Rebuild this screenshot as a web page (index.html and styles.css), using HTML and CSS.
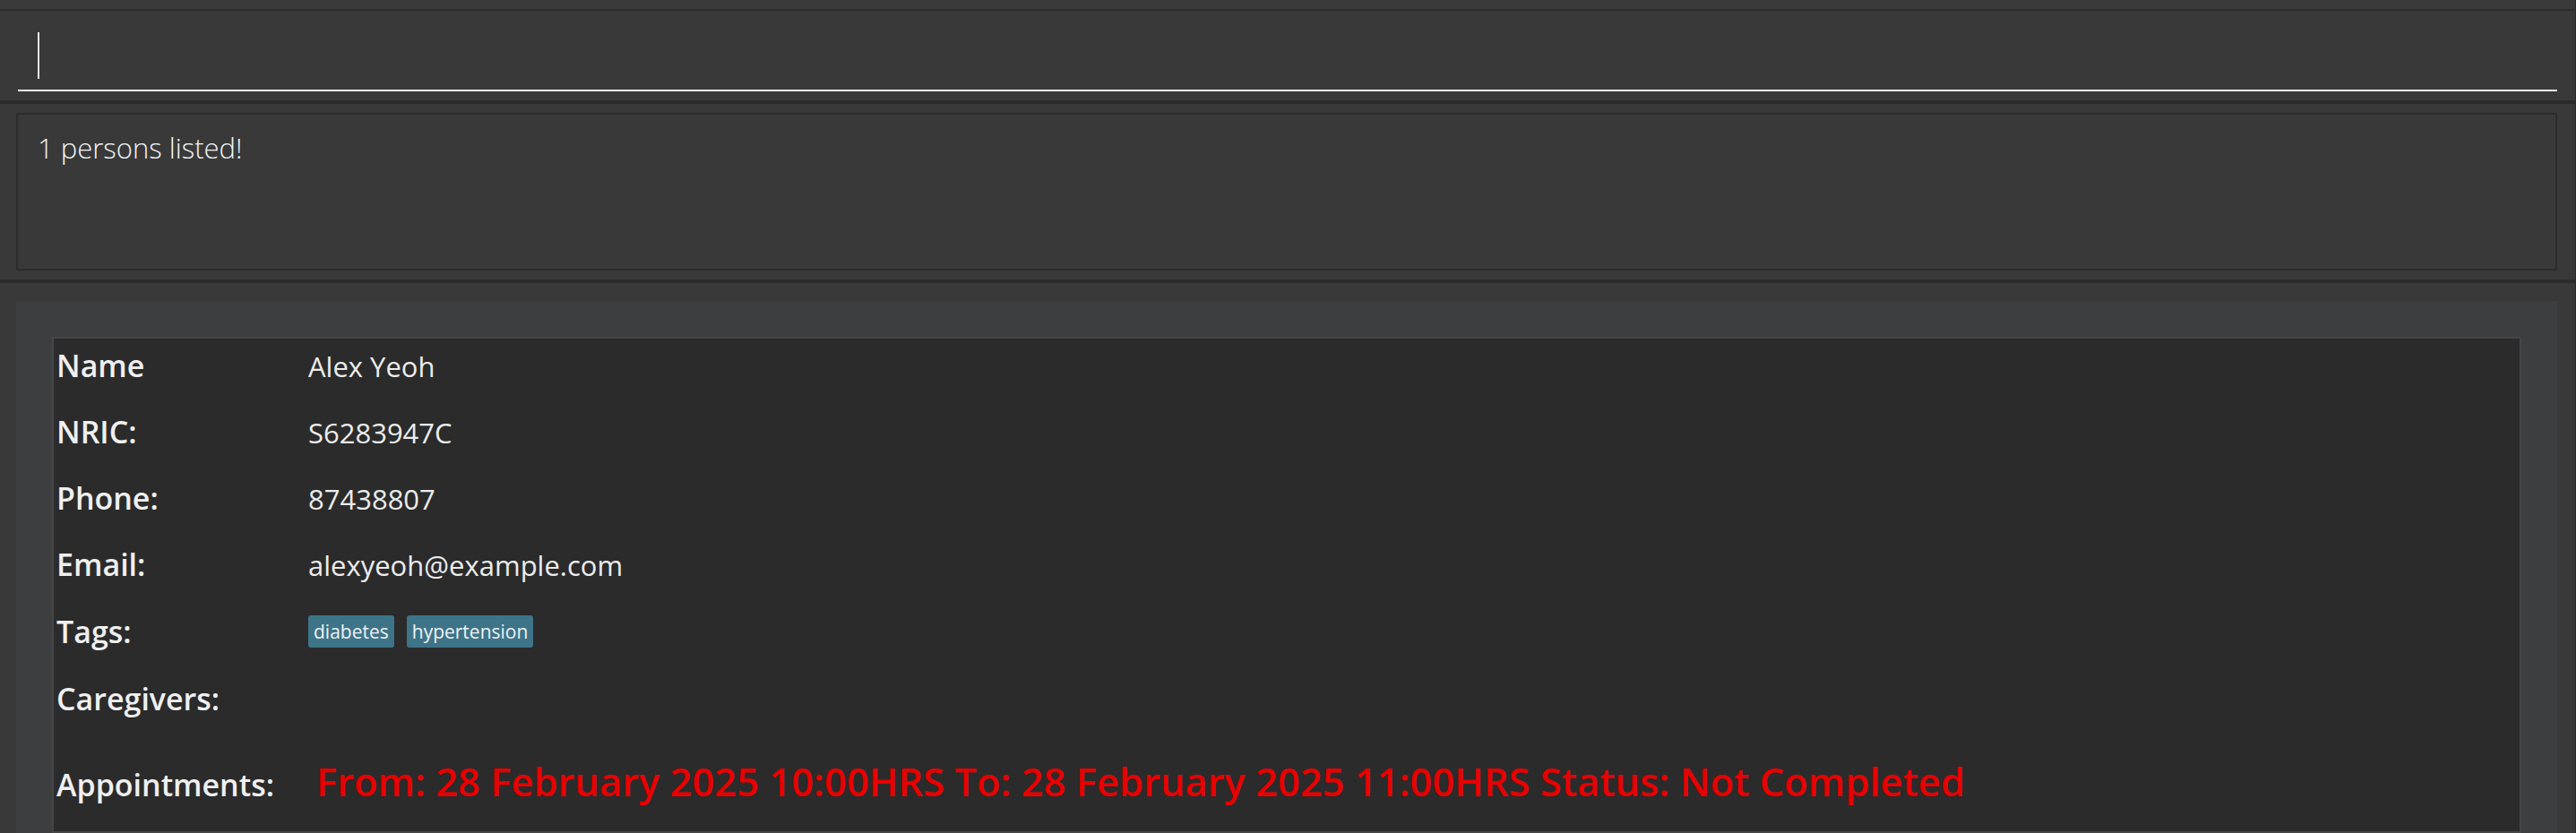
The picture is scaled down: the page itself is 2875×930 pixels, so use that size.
FILE: index.html
```html
<!DOCTYPE html>
<html lang="en">
<head>
<meta charset="utf-8">
<title>Address Book</title>
<link rel="stylesheet" href="styles.css">
</head>
<body>
<div class="app">
  <div class="top-strip"></div>
  <div class="command-section">
    <div class="command-field"><span class="caret"></span></div>
  </div>
  <div class="result-section">
    <div class="result-box">1 persons listed!</div>
  </div>
  <div class="list-section">
    <div class="list-view">
      <div class="card">
        <div class="row">
          <div class="label">Name</div>
          <div class="value">Alex Yeoh</div>
        </div>
        <div class="row">
          <div class="label">NRIC:</div>
          <div class="value">S6283947C</div>
        </div>
        <div class="row">
          <div class="label">Phone:</div>
          <div class="value">87438807</div>
        </div>
        <div class="row row-email">
          <div class="label">Email:</div>
          <div class="value">alexyeoh@example.com</div>
        </div>
        <div class="row row-tags">
          <div class="label">Tags:</div>
          <div class="tags">
            <span class="tag">diabetes</span>
            <span class="tag">hypertension</span>
          </div>
        </div>
        <div class="row row-caregivers">
          <div class="label">Caregivers:</div>
          <div class="value"></div>
        </div>
        <div class="row row-appointments">
          <div class="label">Appointments:</div>
          <div class="appointment">From: 28 February 2025 10:00HRS To: 28 February 2025 11:00HRS Status: Not Completed</div>
        </div>
      </div>
    </div>
  </div>
</div>
</body>
</html>
```

FILE: styles.css
```css
html, body {
  margin: 0;
  padding: 0;
  width: 2875px;
  height: 930px;
  overflow: hidden;
  background: #393939;
  font-family: "Open Sans", "Noto Sans", sans-serif;
}

.app {
  box-sizing: border-box;
  width: 2875px;
  height: 930px;
  border-right: 1px solid #2b2b2b;
  background: #393939;
  display: flex;
  flex-direction: column;
  overflow: hidden;
}

.top-strip {
  height: 10px;
  flex: none;
  background: #3a3a3a;
}

.command-section {
  height: 100px;
  flex: none;
  border-top: 2px solid #2b2b2b;
  background: #393939;
}

.command-field {
  box-sizing: border-box;
  height: 90px;
  margin: 0 20px;
  padding: 24px 0 0 22px;
  border-bottom: 2px solid #f2f2f2;
}

.caret {
  display: block;
  width: 2px;
  height: 52px;
  background: #e8e8e8;
}

.result-section {
  flex: none;
  border-top: 4px solid #2b2b2b;
  padding: 10px 20px 10px 18px;
}

.result-box {
  box-sizing: border-box;
  height: 176px;
  border: 2px solid #2c2c2c;
  background: #393939;
  padding: 16px 0 0 22px;
  color: #f2f4f8;
  font-weight: 300;
  font-size: 31px;
  line-height: 42px;
}

.list-section {
  flex: 1;
  border-top: 4px solid #2b2b2b;
  padding: 20px 20px 0 18px;
  min-height: 0;
}

.list-view {
  height: 100%;
  background: #3d3e40;
  padding: 40px 40px 0 40px;
  box-sizing: border-box;
}

.card {
  box-sizing: border-box;
  height: 554px;
  background: #2b2b2b;
  border: 2px solid #464646;
  padding: 8px 0 1px 3px;
}

.row {
  display: flex;
  align-items: baseline;
  height: 74px;
}

.row-email {
  height: 75px;
}

.row-tags {
  height: 75px;
  align-items: flex-start;
}

.row-caregivers {
  height: 85px;
}

.row-appointments {
  height: 85px;
}

.label {
  width: 281px;
  flex: none;
  color: #f0f0f0;
  font-weight: 600;
  font-size: 34px;
  line-height: 44px;
  white-space: nowrap;
}

.value {
  color: #ececec;
  font-weight: 400;
  font-size: 31px;
  line-height: 44px;
}

.tags {
  display: flex;
  align-items: center;
  gap: 14px;
  height: 44px;
}

.tag {
  display: block;
  background: #3e7488;
  color: #eef2f4;
  font-size: 21px;
  line-height: 32px;
  padding: 2px 6px;
  border-radius: 3px;
}

.appointment {
  margin-left: 9px;
  color: #e80000;
  font-weight: 600;
  font-size: 43.5px;
  line-height: 60px;
  white-space: nowrap;
}
```
